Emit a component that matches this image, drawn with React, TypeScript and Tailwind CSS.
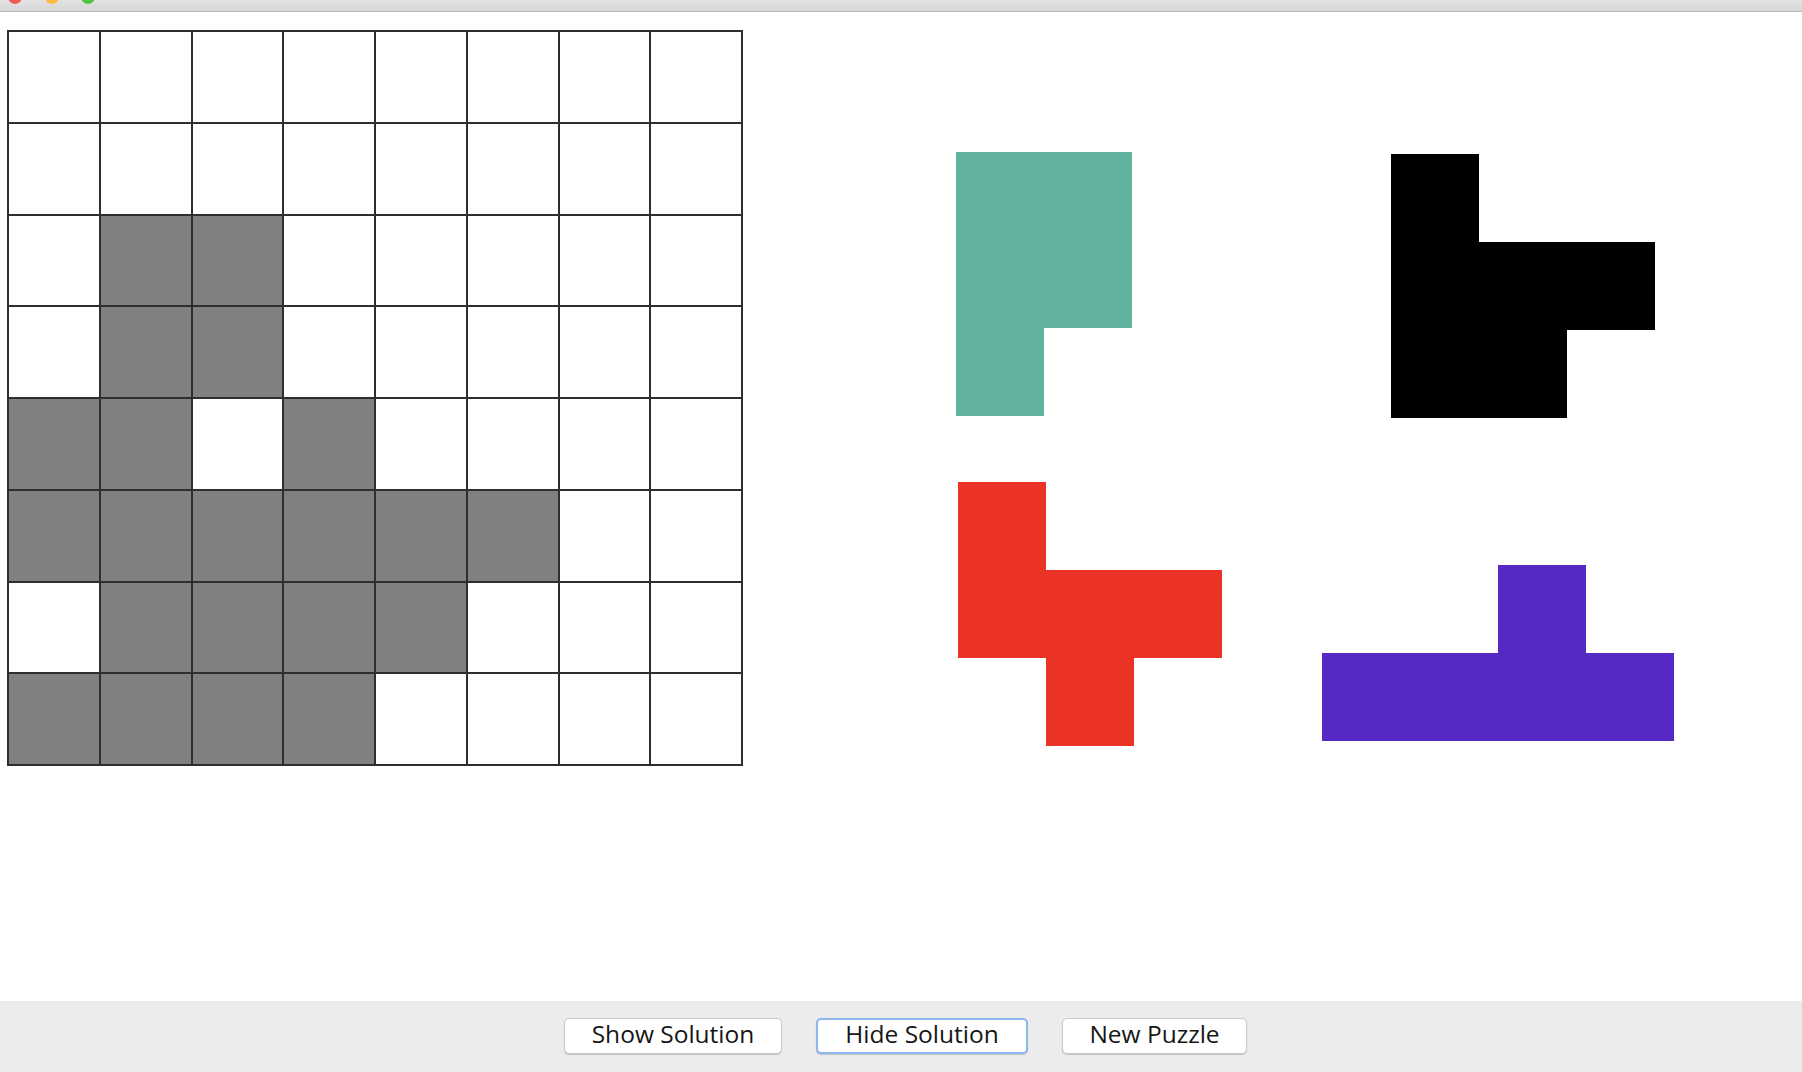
const board: number[][] = [
  [0, 0, 0, 0, 0, 0, 0, 0],
  [0, 0, 0, 0, 0, 0, 0, 0],
  [0, 1, 1, 0, 0, 0, 0, 0],
  [0, 1, 1, 0, 0, 0, 0, 0],
  [1, 1, 0, 1, 0, 0, 0, 0],
  [1, 1, 1, 1, 1, 1, 0, 0],
  [0, 1, 1, 1, 1, 0, 0, 0],
  [1, 1, 1, 1, 0, 0, 0, 0],
];

const CELL = 88;

type Piece = {
  id: string;
  color: string;
  cells: [number, number][]; // [col, row]
  pos: string;
};

const pieces: Piece[] = [
  {
    id: 'teal',
    color: '#61b3a0',
    cells: [[0, 0], [1, 0], [0, 1], [1, 1], [0, 2]],
    pos: 'left-[956px] top-[140px]',
  },
  {
    id: 'black',
    color: '#000000',
    cells: [[0, 0], [0, 1], [1, 1], [2, 1], [0, 2], [1, 2]],
    pos: 'left-[1391px] top-[142px]',
  },
  {
    id: 'red',
    color: '#ea3324',
    cells: [[0, 0], [0, 1], [1, 1], [2, 1], [1, 2]],
    pos: 'left-[958px] top-[470px]',
  },
  {
    id: 'purple',
    color: '#5429c4',
    cells: [[2, 0], [0, 1], [1, 1], [2, 1], [3, 1]],
    pos: 'left-[1322px] top-[553px]',
  },
];

function PieceShape({ piece }: { piece: Piece }) {
  const cols = Math.max(...piece.cells.map((c) => c[0])) + 1;
  const rows = Math.max(...piece.cells.map((c) => c[1])) + 1;
  return (
    <svg
      className={`absolute ${piece.pos}`}
      width={cols * CELL}
      height={rows * CELL}
      shapeRendering="crispEdges"
    >
      {piece.cells.map(([c, r]) => (
        <rect key={`${c}-${r}`} x={c * CELL} y={r * CELL} width={CELL} height={CELL} fill={piece.color} />
      ))}
    </svg>
  );
}

const btn =
  'h-[36px] shrink-0 rounded-[5px] bg-white pb-[3px] text-[24.5px] font-medium leading-none text-[#161616] shadow-[0_1px_1px_rgba(0,0,0,0.18)]';

export default function App() {
  return (
    <div className="w-[1802px] h-[1072px] flex flex-col bg-white overflow-hidden" style={{ fontFamily: '"Open Sans", "Liberation Sans", sans-serif' }}>
      {/* window title bar, mostly cropped */}
      <div className="relative h-[12px] shrink-0 bg-gradient-to-b from-[#e4e4e4] to-[#d6d6d6] border-b border-[#b9b9b9] overflow-hidden">
        <span className="absolute left-[8px] top-[-10px] w-[14px] h-[14px] rounded-full bg-[#f25d56]" />
        <span className="absolute left-[45px] top-[-10px] w-[14px] h-[14px] rounded-full bg-[#fbbe3f]" />
        <span className="absolute left-[81px] top-[-10px] w-[14px] h-[14px] rounded-full bg-[#4fc545]" />
      </div>

      {/* board + pieces */}
      <div className="relative flex-1">
        <div className="pl-[7px] pt-[18px]">
          <div className="grid grid-cols-8 grid-rows-8 w-[736px] h-[736px] gap-[2px] p-[2px] bg-[#2e2e2e]">
            {board.flatMap((row, r) =>
              row.map((v, c) => (
                <div key={`${r}-${c}`} className={v ? 'bg-[#808080]' : 'bg-white'} />
              ))
            )}
          </div>
        </div>
        {pieces.map((p) => (
          <PieceShape key={p.id} piece={p} />
        ))}
      </div>

      {/* button bar */}
      <div className="h-[71px] shrink-0 bg-[#ececec] flex items-start gap-[34px] pl-[564px] pt-[17px]">
        <button className={`${btn} w-[218px] border border-[#c9c9c9]`}>Show Solution</button>
        <button className={`${btn} w-[212px] border-2 border-[#8cb6ee]`}>Hide Solution</button>
        <button className={`${btn} w-[185px] border border-[#c9c9c9]`}>New Puzzle</button>
      </div>
    </div>
  );
}
